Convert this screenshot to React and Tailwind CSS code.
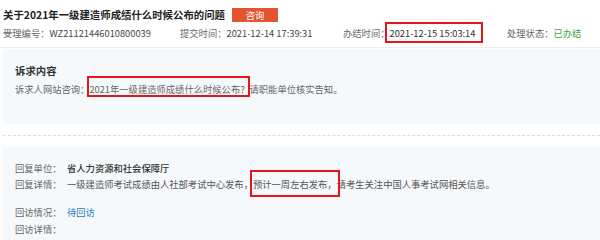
const Mark = ({ children, box }) => (
  <span className="relative">
    {children}
    <span className={`pointer-events-none absolute border-2 border-[#e8141c] ${box}`} />
  </span>
)

const Row = ({ label, children, value = 'text-[#555]' }) => (
  <div className="flex h-[12px] items-center leading-[12px]">
    <span className="w-[52px] shrink-0 text-[#666]">{label}</span>
    <span className={value}>{children}</span>
  </div>
)

const App = () => {
  return (
    <div className="h-[240px] w-[600px] overflow-hidden bg-white font-['Noto_Sans_CJK_SC',sans-serif] text-[9.3px] text-[#666]">
      <div className="border-b border-[#eeeeee] pl-[3px] pt-[8px] pb-[5px]">
        <div className="flex h-[14px] items-center">
          <h1 className="text-[10.4px] font-bold leading-[14px] text-[#222]">关于2021年一级建造师成绩什么时候公布的问题</h1>
          <button className="ml-[7px] h-[14px] w-[46px] bg-[#e4552f] text-[9.3px] leading-[14px] text-white">咨询</button>
        </div>
        <div className="mt-[1px] flex h-[19px] items-center leading-[12px]">
          <div className="w-[177px]">
            受理编号：<span className="text-[#444]">WZ21121446010800039</span>
          </div>
          <div className="w-[163px]">
            提交时间：<span className="text-[#444]">2021-12-14 17:39:31</span>
          </div>
          <div className="w-[164px]">
            办结时间：
            <Mark box="-left-[5px] -right-[8px] -top-[4px] -bottom-[3px]">
              <span className="text-[#333]">2021-12-15 15:03:14</span>
            </Mark>
          </div>
          <div>
            处理状态：<span className="text-[#3aa64b]">已办结</span>
          </div>
        </div>
      </div>

      <section className="ml-[3px] mt-[1px] h-[75px] bg-[#f6f9fb] pl-[12px] pt-[16px]">
        <h2 className="text-[10.4px] font-bold leading-[12px] text-[#333]">诉求内容</h2>
        <p className="mt-[6px] leading-[12px] text-[#666]">
          诉求人网站咨询：
          <Mark box="-left-[2px] -right-[1px] -top-[6px] -bottom-[1px]">2021年一级建造师成绩什么时候公布？</Mark>
          请职能单位核实告知。
        </p>
      </section>

      <div className="ml-[3px] mt-[11px] border-t border-dashed border-[#dddddd]" />

      <section className="ml-[3px] mt-[11px] h-[100px] bg-[#f6f9fb] pl-[12px] pt-[15px]">
        <Row label="回复单位：" value="text-[#333] font-medium">省人力资源和社会保障厅</Row>
        <div className="mt-[4px]">
          <Row label="回复详情：">
            一级建造师考试成绩由人社部考试中心发布，
            <Mark box="-left-[3px] -right-[3px] -top-[7px] -bottom-[6px]">预计一周左右发布，</Mark>
            请考生关注中国人事考试网相关信息。
          </Row>
        </div>
        <div className="mt-[16px]">
          <Row label="回访情况：" value="text-[#2b7cc0]">待回访</Row>
        </div>
        <div className="mt-[5px]">
          <Row label="回访详情：" />
        </div>
      </section>
    </div>
  )
}

export default App
